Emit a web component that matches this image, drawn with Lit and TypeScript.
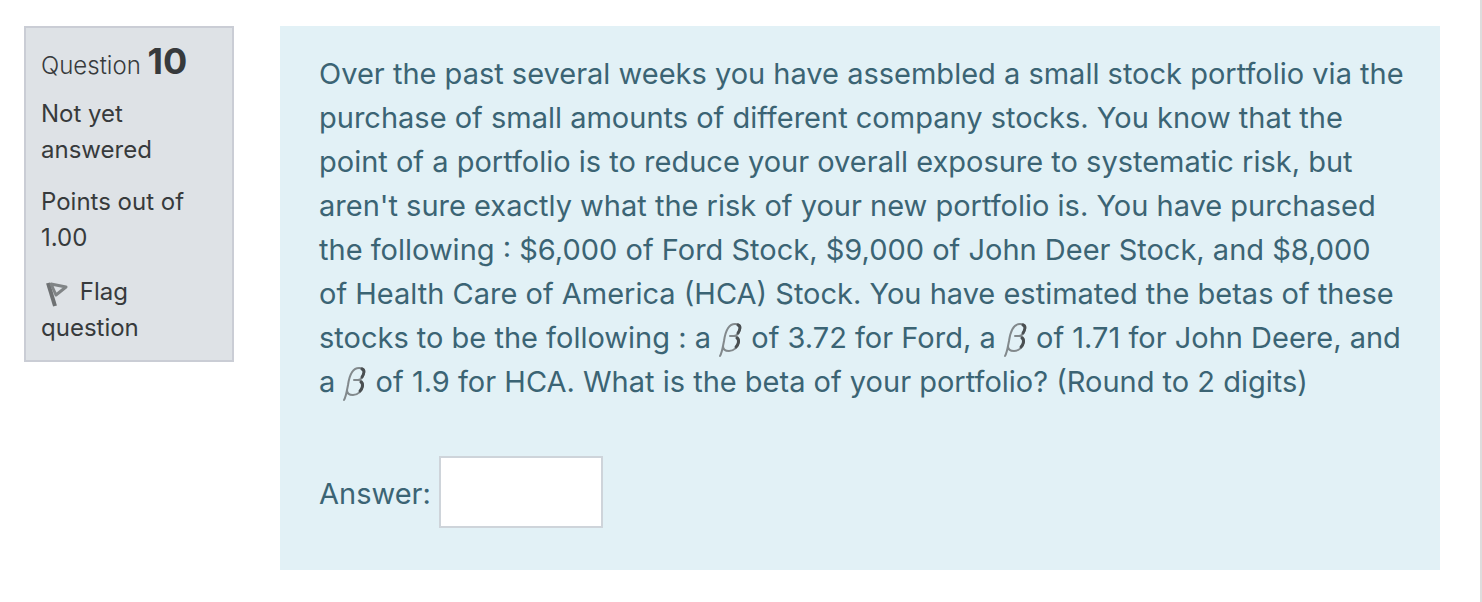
import { LitElement, html, css } from "lit";
import { customElement } from "lit/decorators.js";

@customElement("beta-symbol")
class BetaSymbol extends LitElement {
  static styles = css`
    :host { display: inline-block; width: 24px; height: 36px; margin: -4px 0; vertical-align: -6px; }
    svg { display: block; width: 24px; height: 36px; }
    .stroke { fill: none; stroke-linecap: round; stroke-linejoin: round; }
    .light { stroke: #82898c; stroke-width: 2; }
    .dark { stroke: #4a4f51; stroke-width: 3; }
  `;
  render() {
    return html`<svg viewBox="0 0 24 36" role="img" aria-label="beta">
      <path class="stroke light" d="M1 34 C3 31 4 24 5 19 C6 12 8 2 16 2 C20 2 22 3 21 7 C20 11 18 14 15 14 L11 14 M15 14 C19 14 20 17 20 20 C19 25 15 29 10 29 C6 29 4 27 4 24" />
      <path class="stroke dark" d="M19 3 C22 4 21 8 19 11 M18 16 C21 18 19 23 17 25" />
    </svg>`;
  }
}

@customElement("question-info")
class QuestionInfo extends LitElement {
  static styles = css`
    :host { display: block; flex: 0 0 210px; }
    .info {
      box-sizing: border-box; padding: 15px 15px 14px; border: 2px solid #cacdd5;
      background: #dee2e6; color: #373a3c; font-size: 24px; line-height: 36px;
    }
    h3 { margin: 0 0 12px; font-size: 24px; font-weight: 300; line-height: 36px; }
    .number { font-size: 36px; font-weight: 700; }
    p { margin: 0 0 16px; }
    .flag { display: block; margin-top: 18px; padding: 0; border: 0; background: none; color: inherit; font: inherit; text-align: left; cursor: pointer; }
    svg { width: 32px; height: 32px; margin: -4px 0; vertical-align: -8px; }
    .pole { fill: none; stroke: #6e7173; stroke-width: 4; }
    .cloth { fill: none; stroke: #808486; stroke-width: 3; stroke-linejoin: round; }
  `;
  render() {
    return html`<aside class="info">
      <h3>Question <span class="number">10</span></h3>
      <p>Not yet answered</p>
      <p>Points out of 1.00</p>
      <button class="flag" type="button"><svg viewBox="0 0 32 32" aria-hidden="true">
        <path class="pole" d="M7 3 L14 26" />
        <path class="cloth" d="M10 4 L25 7 L15 15 Z" />
      </svg> Flag question</button>
    </aside>`;
  }
}

@customElement("app-root")
class AppRoot extends LitElement {
  static styles = css`
    :host { display: block; min-height: 100vh; box-sizing: border-box; border-right: 2px solid #dddddd; background: #fff; font-family: Inter, sans-serif; }
    .question { display: flex; align-items: flex-start; gap: 46px; padding: 26px 40px 32px 24px; }
    .content { flex: 1; padding: 26px 32px 42px 39px; background: #e2f1f6; color: #3b6474; font-size: 29px; line-height: 44px; }
    p { margin: 0 0 52px; }
    .answer { display: flex; align-items: center; gap: 8px; }
    label { padding-top: 4px; }
    input { box-sizing: border-box; width: 164px; height: 72px; padding: 12px; border: 2px solid #ced4da; border-radius: 0; background: #fff; color: #495057; font: inherit; }
  `;
  render() {
    return html`<main class="question">
      <question-info></question-info>
      <section class="content">
        <p>Over the past several weeks you have assembled a small stock portfolio via the purchase of small amounts of different company stocks. You know that the point of a portfolio is to reduce your overall exposure to systematic risk, but aren't sure exactly what the risk of your new portfolio is. You have purchased the following : $6,000 of Ford Stock, $9,000 of John Deer Stock, and $8,000 of&nbsp;Health Care of America (HCA) Stock. You have estimated the betas of these stocks to be the following : a <beta-symbol></beta-symbol> of 3.72 for Ford, a <beta-symbol></beta-symbol> of 1.71 for John Deere, and a <beta-symbol></beta-symbol> of 1.9 for HCA. What is the beta of your portfolio? (Round to 2 digits)</p>
        <div class="answer"><label for="answer">Answer:</label><input id="answer" type="text" autocomplete="off"></div>
      </section>
    </main>`;
  }
}
